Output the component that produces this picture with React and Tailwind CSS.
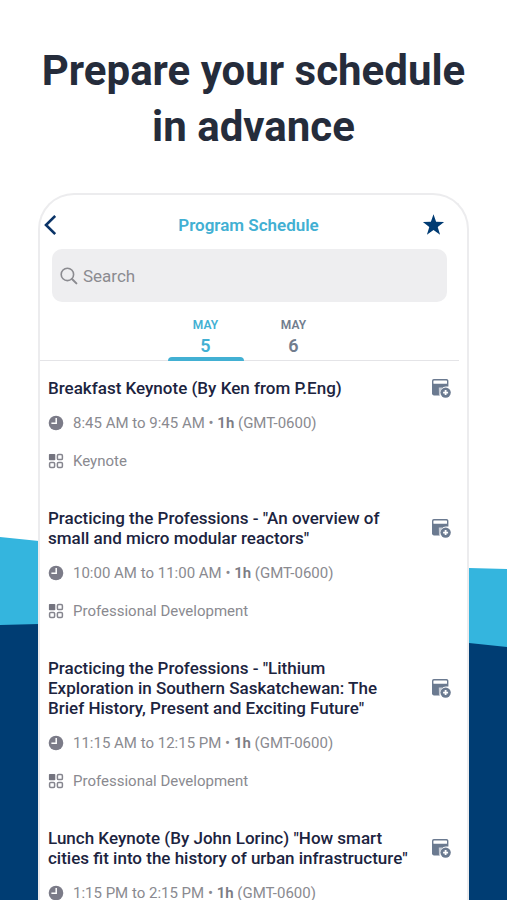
import React from 'react';

const DAYS = [
    { month: 'MAY', day: '5', active: true },
    { month: 'MAY', day: '6', active: false },
];

const SESSIONS = [
    {
        title: 'Breakfast Keynote (By Ken from P.Eng)',
        time: '8:45 AM to 9:45 AM',
        duration: '1h',
        track: 'Keynote',
    },
    {
        title: 'Practicing the Professions - "An overview of small and micro modular reactors"',
        time: '10:00 AM to 11:00 AM',
        duration: '1h',
        track: 'Professional Development',
    },
    {
        title: 'Practicing the Professions - "Lithium Exploration in Southern Saskatchewan: The Brief History, Present and Exciting Future"',
        time: '11:15 AM to 12:15 PM',
        duration: '1h',
        track: 'Professional Development',
    },
    {
        title: 'Lunch Keynote (By John Lorinc) "How smart cities fit into the history of urban infrastructure"',
        time: '1:15 PM to 2:15 PM',
        duration: '1h',
        track: 'Keynote',
    },
];

const ChevronIcon = () => (
    <svg className="w-3 h-5" viewBox="0 0 12 20" fill="none" stroke="#0b3468" strokeWidth="2.6">
        <path d="M11.2 1 2 10l9.2 9" />
    </svg>
);

const StarIcon = () => (
    <svg className="w-6 h-6" viewBox="0 0 24 24" fill="#003b73">
        <path d="M12.5 1.2l2.6 7.6 8 .2-6.4 4.9 2.4 7.8-6.6-4.6-6.6 4.6 2.4-7.8L1.9 9l8-.2z" />
    </svg>
);

const SearchIcon = () => (
    <svg className="w-[18px] h-[18px] shrink-0" viewBox="0 0 18 18" fill="none" stroke="#8b8b90" strokeWidth="1.6">
        <circle cx="7.4" cy="7.4" r="6.2" />
        <path strokeWidth="2" strokeLinecap="round" d="M12 12l4.4 4.4" />
    </svg>
);

const ClockIcon = () => (
    <svg className="w-4 h-4 shrink-0" viewBox="0 0 16 16">
        <circle cx="8" cy="8" r="7.3" fill="#7b7b88" />
        <path d="M8.2 3v5.2H3.4" fill="none" stroke="#fff" strokeWidth="1.5" />
    </svg>
);

const TrackIcon = () => (
    <svg className="w-4 h-4 shrink-0" viewBox="0 0 16 16" fill="none" stroke="#85858e" strokeWidth="1.5">
        <rect x="0.9" y="0.9" width="6.4" height="6.4" rx="0.8" fill="#74747f" stroke="none" />
        <rect x="9.4" y="1.6" width="5" height="5" rx="1.2" />
        <rect x="1.6" y="9.4" width="5" height="5" rx="1.2" />
        <rect x="9.4" y="9.4" width="5" height="5" rx="1.2" />
    </svg>
);

const CalendarAddIcon = () => (
    <svg className="w-5 h-5" viewBox="0 0 20 20">
        <rect x="1" y="1" width="16.4" height="16.4" rx="1.8" fill="#6b7a90" />
        <rect x="2.4" y="2.4" width="13.6" height="3.4" rx="0.6" fill="#fff" />
        <path d="M7.8 9.4h3.4l-1.4 2.4V18H8z" fill="#c9ced7" />
        <path d="M9 18.5v-4.2a5.8 5.8 0 0 1 5.8-5.8H19v10z" fill="#fff" />
        <circle cx="14.6" cy="14.6" r="5.2" fill="#6b7a90" />
        <path d="M14.6 12.1v5M12.1 14.6h5" stroke="#fff" strokeWidth="1.8" />
    </svg>
);

const Backdrop = () => (
    <svg className="absolute inset-0 w-full h-full" viewBox="0 0 507 900" preserveAspectRatio="none" aria-hidden="true">
        <path d="M0 537l39 4 430 27 38 1v331H0z" fill="#34b5de" />
        <path d="M0 625l39-1 430 19 38 4v253H0z" fill="#003d73" />
    </svg>
);

const DayTab = ({ month, day, active }) => (
    <button
        type="button"
        role="tab"
        aria-selected={active}
        className={`relative w-[76px] h-full pt-[15px] flex flex-col items-center ${active ? 'text-[#42b0d3]' : 'text-[#717d8e]'}`}
    >
        <span className="text-xs leading-4 font-semibold">{month}</span>
        <span className="mt-[3px] text-lg leading-5 font-semibold">{day}</span>
        {active && <span className="absolute inset-x-0 -bottom-px h-1 rounded-t-sm bg-[#42b0d3]" />}
    </button>
);

const SessionItem = ({ session }) => (
    <li className="pl-2 pr-4 pb-[37px]">
        <div className="flex items-center justify-between gap-5">
            <h2 className="flex-1 text-[17px] leading-5 font-medium text-[#1c2440]">{session.title}</h2>
            <button type="button" aria-label="Add to calendar" className="shrink-0">
                <CalendarAddIcon />
            </button>
        </div>
        <div className="mt-[15px] flex items-center gap-[9px] text-[15px] leading-5 text-[#8a8a90]">
            <ClockIcon />
            <p>
                {session.time} • <span className="font-semibold text-[#7c7c84]">{session.duration}</span> (GMT-0600)
            </p>
        </div>
        <div className="mt-[18px] flex items-center gap-[9px] text-[15px] leading-5 text-[#8a8a90]">
            <TrackIcon />
            <p>{session.track}</p>
        </div>
    </li>
);

const App = () => {
    return (
        <div className="relative h-screen overflow-hidden bg-white font-['Roboto',sans-serif]">
            <Backdrop />
            <div className="relative h-full flex flex-col">
                <h1 className="pt-[43px] text-center text-[42px] leading-[56px] font-bold text-[#252c3b]">
                    Prepare your schedule
                    <br />
                    in advance
                </h1>

                <main className="mt-[38px] mx-[38px] flex-1 min-h-0 overflow-hidden rounded-t-[36px] border-2 border-b-0 border-[#ececee] bg-white">
                    {/* Title bar */}
                    <header className="h-[54px] pt-1.5 pl-1 pr-[22px] flex items-center">
                        <button type="button" aria-label="Back" className="w-6">
                            <ChevronIcon />
                        </button>
                        <h2 className="flex-1 pl-2 text-center text-[17px] leading-6 font-semibold text-[#42b0d3]">Program Schedule</h2>
                        <button type="button" aria-label="Favourites" className="w-6">
                            <StarIcon />
                        </button>
                    </header>

                    {/* Search */}
                    <label className="ml-3 mr-5 h-[53px] px-2 flex items-center gap-[5px] rounded-[10px] bg-[#eeeef0]">
                        <SearchIcon />
                        <input
                            type="search"
                            placeholder="Search"
                            aria-label="Search"
                            className="flex-1 min-w-0 bg-transparent text-[17px] leading-6 text-[#1c2440] placeholder:text-[#8b8b90] outline-none"
                        />
                    </label>

                    {/* Day tabs */}
                    <div role="tablist" className="mr-2 h-[59px] flex justify-center gap-3 border-b border-[#e4e4e7]">
                        {DAYS.map((d) => (
                            <DayTab key={d.day} {...d} />
                        ))}
                    </div>

                    <ul className="pt-[17px]">
                        {SESSIONS.map((session) => (
                            <SessionItem key={session.title} session={session} />
                        ))}
                    </ul>
                </main>
            </div>
        </div>
    );
};

export default App;
